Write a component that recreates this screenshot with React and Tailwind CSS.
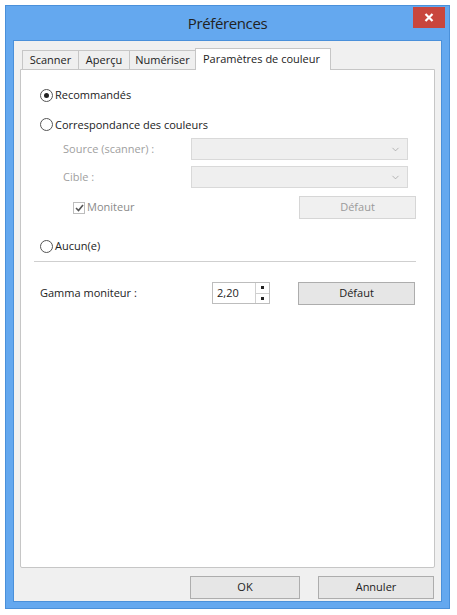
import { ChevronDown } from 'lucide-react';

function Radio({ checked, label, className = '' }) {
  return (
    <div className={`flex items-center gap-[2px] ${className}`}>
      <span className="w-[13px] h-[13px] rounded-full border border-[#555] bg-white flex items-center justify-center">
        {checked && <span className="w-[5px] h-[5px] rounded-full bg-[#222]" />}
      </span>
      <span className="text-[#222]">{label}</span>
    </div>
  );
}

function Combo() {
  return (
    <div className="w-[217px] h-[22px] border border-[#d9d9d9] bg-[#efefef] flex items-center justify-end pr-[6px]">
      <ChevronDown size={11} strokeWidth={1.5} className="text-[#999]" />
    </div>
  );
}

function Btn({ children, className = '', disabled = false }) {
  return (
    <div
      className={`h-[23px] border flex items-center justify-center ${disabled ? 'border-[#d6d6d6] bg-[#f0f0f0] text-[#9a9a9a]' : 'border-[#adadad] bg-[#e6e6e6] text-[#222]'} ${className}`}
    >
      {children}
    </div>
  );
}

export default function App() {
  const tabs = [
    { label: 'Scanner', w: 'w-[57px]' },
    { label: 'Aperçu', w: 'w-[52px]' },
    { label: 'Numériser', w: 'w-[67px]' },
  ];

  return (
    <div
      className="w-[457px] h-[615px] bg-white pt-[5px] pl-[5px] text-[11px]"
      style={{ fontFamily: '"Open Sans", "Noto Sans", sans-serif' }}
    >
      <div className="w-[445px] h-[604px] bg-[#64a8ef] border border-[#4a90da] flex flex-col px-[7px] pb-[6px]">
        <div className="h-[34px] relative flex items-center justify-center">
          <span className="text-[15px] text-[#222] tracking-tight">Préférences</span>
          <div className="absolute right-[-3px] top-[1px] w-[32px] h-[21px] bg-[#c9463d] flex items-center justify-center">
            <svg width="10" height="9" viewBox="0 0 10 9">
              <path d="M1.5 1 L8.5 8 M8.5 1 L1.5 8" stroke="white" strokeWidth="2.2" />
            </svg>
          </div>
        </div>

        <div className="flex-1 bg-[#f0f0f0] border border-[#4a90da] flex flex-col px-[6px] pt-[6px]">
          <div className="flex items-end h-[22px] relative z-10 pl-[2px]">
            {tabs.map((t) => (
              <div
                key={t.label}
                className={`${t.w} h-[19px] border border-b-0 border-[#c6c6c6] bg-[#efefef] flex items-center justify-center text-[#222] -mr-px`}
              >
                {t.label}
              </div>
            ))}
            <div className="h-[22px] w-[136px] px-[7px] border border-b-0 border-[#c6c6c6] bg-white flex items-start pt-[2px] text-[#222] mb-[-1px]">
              Paramètres de couleur
            </div>
          </div>

          <div className="h-[499px] bg-white border border-[#c6c6c6] rounded-b-[2px] px-[13px] pt-[17px]">
            <Radio checked label="Recommandés" className="ml-[6px]" />
            <Radio label="Correspondance des couleurs" className="ml-[6px] mt-[13px]" />

            <div className="ml-[29px] mt-[5px] text-[#a0a0a0]">
              <div className="flex items-center justify-between pr-[13px]">
                <span>Source (scanner) :</span>
                <Combo />
              </div>
              <div className="flex items-center justify-between pr-[13px] mt-[6px]">
                <span>Cible :</span>
                <Combo />
              </div>
              <div className="flex items-center justify-between pr-[5px] mt-[8px]">
                <div className="flex items-center gap-[2px] ml-[10px]">
                  <span className="w-[12px] h-[12px] border border-[#bdbdbd] bg-white flex items-center justify-center">
                    <svg width="9" height="8" viewBox="0 0 9 8">
                      <path d="M1 4 L3.5 6.5 L8 1" stroke="#555" strokeWidth="1.6" fill="none" />
                    </svg>
                  </span>
                  <span className="text-[#8a8a8a]">Moniteur</span>
                </div>
                <Btn disabled className="w-[117px]">Défaut</Btn>
              </div>
            </div>

            <Radio label="Aucun(e)" className="ml-[6px] mt-[19px]" />

            <div className="h-px bg-[#cfcfcf] mt-[6px] mr-[5px]" />

            <div className="flex items-center mt-[20px]">
              <span className="text-[#222] ml-[6px] w-[172px]">Gamma moniteur :</span>
              <div className="w-[58px] h-[22px] border border-[#bdbdbd] bg-white flex items-center">
                <span className="pl-[4px] flex-1 text-[#222]">2,20</span>
                <div className="w-[14px] h-full border-l border-[#d0d0d0] flex flex-col">
                  <div className="flex-1 flex items-center justify-center border-b border-[#d0d0d0]">
                    <span className="w-[3px] h-[3px] bg-[#222]" />
                  </div>
                  <div className="flex-1 flex items-center justify-center">
                    <span className="w-[3px] h-[3px] bg-[#222]" />
                  </div>
                </div>
              </div>
              <Btn className="w-[117px] ml-[28px]">Défaut</Btn>
            </div>
          </div>

          <div className="flex justify-end gap-[18px] mt-[8px] pr-[1px]">
            <Btn className="w-[110px] border-[#3c8ee0] bg-[#e5eef8]">OK</Btn>
            <Btn className="w-[116px]">Annuler</Btn>
          </div>
        </div>
      </div>
    </div>
  );
}
